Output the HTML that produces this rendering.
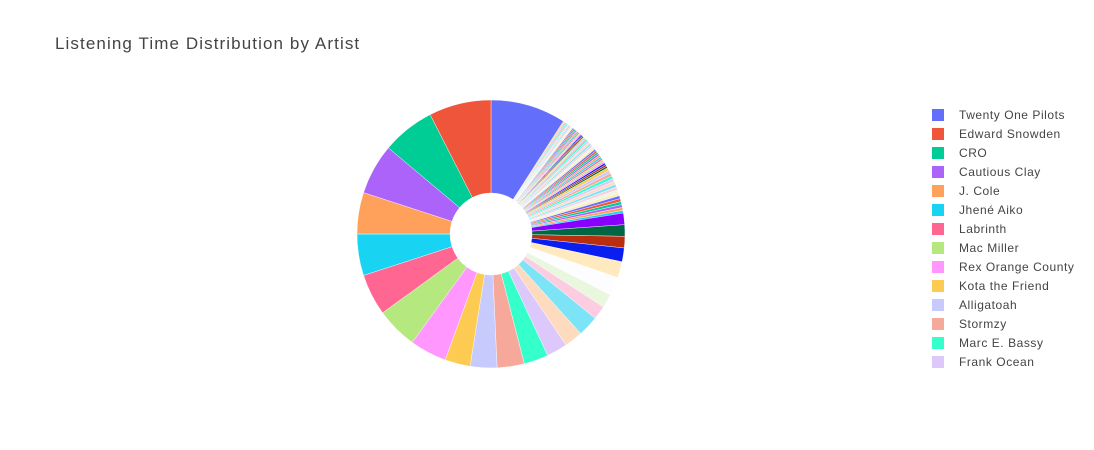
<!DOCTYPE html>
<html><head><meta charset="utf-8"><style>
body{margin:0;background:#fff;width:1094px;height:450px;overflow:hidden;font-family:"Liberation Sans",sans-serif}
.t{position:absolute;left:55px;top:34px;font-size:17px;color:#444;letter-spacing:1.1px}
.lg{position:absolute;left:932px;top:105px}
.r{height:19px;display:flex;align-items:center;font-size:12px;color:#444;letter-spacing:0.55px}
.s{width:12px;height:12px;margin-right:15px}
</style></head><body>
<div class="t">Listening Time Distribution by Artist</div>
<svg id="p" width="1094" height="450" style="position:absolute;left:0;top:0"></svg>
<div class="lg">
<div class="r"><span class="s" style="background:#636efa"></span>Twenty One Pilots</div>
<div class="r"><span class="s" style="background:#ef553b"></span>Edward Snowden</div>
<div class="r"><span class="s" style="background:#00cc96"></span>CRO</div>
<div class="r"><span class="s" style="background:#ab63fa"></span>Cautious Clay</div>
<div class="r"><span class="s" style="background:#ffa15a"></span>J. Cole</div>
<div class="r"><span class="s" style="background:#19d3f3"></span>Jhené Aiko</div>
<div class="r"><span class="s" style="background:#ff6692"></span>Labrinth</div>
<div class="r"><span class="s" style="background:#b6e880"></span>Mac Miller</div>
<div class="r"><span class="s" style="background:#ff97ff"></span>Rex Orange County</div>
<div class="r"><span class="s" style="background:#fecb52"></span>Kota the Friend</div>
<div class="r"><span class="s" style="background:#c6cafd"></span>Alligatoah</div>
<div class="r"><span class="s" style="background:#f6a99b"></span>Stormzy</div>
<div class="r"><span class="s" style="background:#35ffca"></span>Marc E. Bassy</div>
<div class="r"><span class="s" style="background:#dcc8fb"></span>Frank Ocean</div>
</div>
<script>
var cx=491,cy=234,R=134,r=41;
var S=[[0,32.7,'#636efa']];
var pal=['#fecb52','#c6cafd','#f6a99b','#35ffca','#dcc8fb','#fedbbf','#7de3f7','#fccde0','#e8f7dd','#ffe9bf','#636efa','#ef553b','#00cc96','#ab63fa','#ffa15a','#19d3f3','#ff6692','#b6e880','#ff97ff','#0a1ef0','#b82e0f','#006644'];
var a=32.7,n=0;
while(a<81){var w=a<45?0.5:(a<60?0.8:1.3);S.push([a,a+w,pal[n%pal.length]]);a+=w;n++;}
S.push([81,86,'#8800ff'],[86,91,'#006644'],[91,96,'#b82e0f'],[96,102,'#0a1ef0'],[102,109,'#ffe9bf'],[109,117,'#fdfdff'],[117,123,'#e8f7dd'],[123,129,'#fccde0'],[129,138,'#7de3f7'],[138,146,'#fedbbf'],[146,155,'#dcc8fb'],[155,165.6,'#35ffca'],[165.6,177.4,'#f6a99b'],[177.4,189,'#c6cafd'],[189,200,'#fecb52'],[200,216,'#ff97ff'],[216,234,'#b6e880'],[234,252,'#ff6692'],[252,270,'#19d3f3'],[270,288,'#ffa15a'],[288,310,'#ab63fa'],[310,333,'#00cc96'],[333,360,'#ef553b']);
function P(d,rad){var t=d*Math.PI/180;return (cx+rad*Math.sin(t)).toFixed(2)+' '+(cy-rad*Math.cos(t)).toFixed(2);}
var h='';
S.forEach(function(s){var l=(s[1]-s[0])>180?1:0;
h+='<path d="M'+P(s[0],r)+' L'+P(s[0],R)+' A'+R+' '+R+' 0 '+l+' 1 '+P(s[1],R)+' L'+P(s[1],r)+' A'+r+' '+r+' 0 '+l+' 0 '+P(s[0],r)+'Z" fill="'+s[2]+'" stroke="#fff" stroke-width="0.4"/>';});
document.getElementById('p').innerHTML=h;
</script>
</body></html>
